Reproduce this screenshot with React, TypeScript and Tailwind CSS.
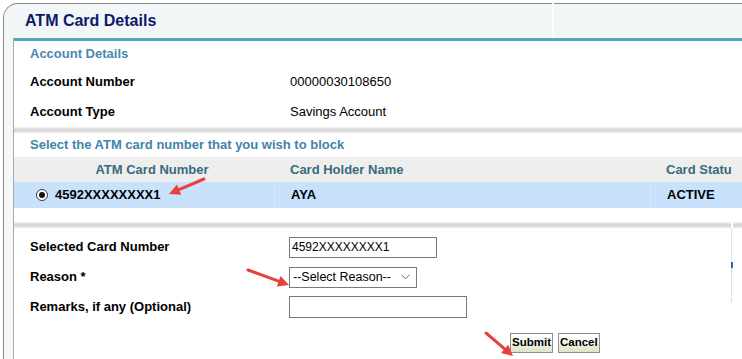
import React from 'react';

type Pt = [number, number];

// red annotation arrow: line plus a filled head at the tip
function Arrow({ from, to }: { from: Pt; to: Pt }) {
  const dx = to[0] - from[0];
  const dy = to[1] - from[1];
  const len = Math.hypot(dx, dy);
  const ux = dx / len;
  const uy = dy / len;
  const headLen = 11;
  const half = 5.5;
  const bx = to[0] - ux * headLen;
  const by = to[1] - uy * headLen;
  const p1 = `${bx - uy * half},${by + ux * half}`;
  const p2 = `${bx + uy * half},${by - ux * half}`;
  return (
    <g>
      <line x1={from[0]} y1={from[1]} x2={bx + ux * 2} y2={by + uy * 2} stroke="#e8413c" strokeWidth={3} strokeLinecap="round" />
      <polygon points={`${to[0]},${to[1]} ${p1} ${p2}`} fill="#e8413c" />
    </g>
  );
}

function Separator({ split }: { split?: boolean }) {
  const band = 'h-[6px] bg-linear-to-b from-[#f3f3f3] via-[#d4d4d4] to-[#ededed]';
  if (!split) return <div className={band} />;
  return (
    <div className="flex">
      <div className={`w-[717px] ${band}`} />
      <div className="w-[2px] bg-white" />
      <div className={`flex-1 ${band}`} />
    </div>
  );
}

function InfoRow({ label, value }: { label: string; value: string }) {
  return (
    <div className="flex items-center h-[30px]">
      <div className="w-[276px] pl-[16px] font-bold text-[13px] text-black">{label}</div>
      <div className="text-[13px] text-black">{value}</div>
    </div>
  );
}

function FormButton({ children }: { children: React.ReactNode }) {
  return (
    <button className="h-[20px] px-[1px] border border-[#8e8e8e] bg-linear-to-b from-white via-[#f3f4ec] to-[#dde3c6] text-[11.5px] font-bold text-black leading-none">
      {children}
    </button>
  );
}

export default function App() {
  return (
    <div className="relative w-[742px] h-[359px] overflow-hidden bg-white pt-[3px] pl-[3px] font-['Liberation_Sans',Arial,sans-serif]">
      <div className="h-full border-l border-t border-[#8a8a8a] rounded-tl-[15px] bg-[#f3f6f7]">
        {/* title bar */}
        <div className="flex h-[34px]">
          <div className="w-[548px] pl-[21px] flex items-center">
            <h1 className="text-[16px] font-bold text-[#0d1a6b]">ATM Card Details</h1>
          </div>
          <div className="w-[2px] -mt-px bg-white" />
          <div className="flex-1" />
        </div>

        <div className="flex h-full">
          <div className="w-[9px] bg-[#f6f7f7]" />
          <div className="flex-1 border-l border-[#a9a9a9] bg-white">
            {/* account details */}
            <div className="border-t-[3px] border-[#50aab9]">
              <div className="h-[26px] flex items-center pl-[16px] text-[13px] font-bold text-[#4a88ad]">
                Account Details
              </div>
              <InfoRow label="Account Number" value="00000030108650" />
              <InfoRow label="Account Type" value="Savings Account" />
            </div>

            <Separator />

            {/* card selection */}
            <div>
              <div className="h-[24px] flex items-center pl-[16px] text-[13px] font-bold text-[#3f84a9]">
                Select the ATM card number that you wish to block
              </div>
              <div className="flex h-[25px] items-center bg-[#eeeeee] text-[13px] font-bold text-[#386c7a]">
                <div className="w-[260px] pl-[16px] text-center">ATM Card Number</div>
                <div className="w-[376px] pl-[16px]">Card Holder Name</div>
                <div className="flex-1 pl-[16px] whitespace-nowrap">Card Statu</div>
              </div>
              <div className="flex h-[26px] bg-[#c8e2fc] text-[13px] font-bold text-black">
                <div className="w-[260px] flex items-center pl-[22px] gap-[7px]">
                  <span className="w-[12px] h-[12px] rounded-full border border-[#3a3a3a] bg-white flex items-center justify-center">
                    <span className="w-[6px] h-[6px] rounded-full bg-[#111]" />
                  </span>
                  <span>4592XXXXXXXX1</span>
                </div>
                <div className="w-[376px] flex items-center pl-[16px] border-l border-dotted border-[#e3edf7]">AYA</div>
                <div className="flex-1 flex items-center pl-[16px] border-l border-dotted border-[#e3edf7]">ACTIVE</div>
              </div>
              <div className="h-[14px]" />
            </div>

            <Separator split />

            {/* block form */}
            <div className="flex">
              <div className="w-[717px] pt-[4px]">
                <div className="flex items-center h-[30px]">
                  <div className="w-[275px] pl-[16px] font-bold text-[13px] text-black">Selected Card Number</div>
                  <div className="w-[148px] h-[21px] border border-[#7a7a7a] px-[2px] flex items-center text-[12px] text-black">
                    4592XXXXXXXX1
                  </div>
                </div>
                <div className="flex items-center h-[30px]">
                  <div className="w-[275px] pl-[16px] font-bold text-[13px] text-black">Reason *</div>
                  <div className="w-[128px] h-[21px] border border-[#7a7a7a] pl-[3px] pr-[6px] flex items-center justify-between text-[12.5px] text-black">
                    <span>--Select Reason--</span>
                    <svg width="9" height="6" viewBox="0 0 9 6">
                      <polyline points="0.5,0.8 4.5,4.8 8.5,0.8" fill="none" stroke="#666" strokeWidth="1" />
                    </svg>
                  </div>
                </div>
                <div className="flex items-center h-[30px]">
                  <div className="w-[275px] pl-[16px] font-bold text-[13px] text-black">Remarks, if any (Optional)</div>
                  <div className="w-[178px] h-[22px] border border-[#7a7a7a]" />
                </div>
                <div className="flex gap-[5px] mt-[11px] pl-[496px]">
                  <FormButton>Submit</FormButton>
                  <FormButton>Cancel</FormButton>
                </div>
              </div>
              <div className="flex flex-col">
                <div className="h-[34px] border-l border-[#e6e6e6]" />
                <div className="h-[6px] border-l-2 border-[#2c69a5]" />
                <div className="h-[34px] border-l border-dotted border-[#a9c8e6]" />
              </div>
            </div>
          </div>
        </div>
      </div>

      {/* annotation arrows */}
      <svg className="absolute inset-0 pointer-events-none" width="742" height="359">
        <Arrow from={[204, 179]} to={[169, 194]} />
        <Arrow from={[248, 270]} to={[289, 285]} />
        <Arrow from={[486, 333]} to={[513, 356]} />
      </svg>
    </div>
  );
}
